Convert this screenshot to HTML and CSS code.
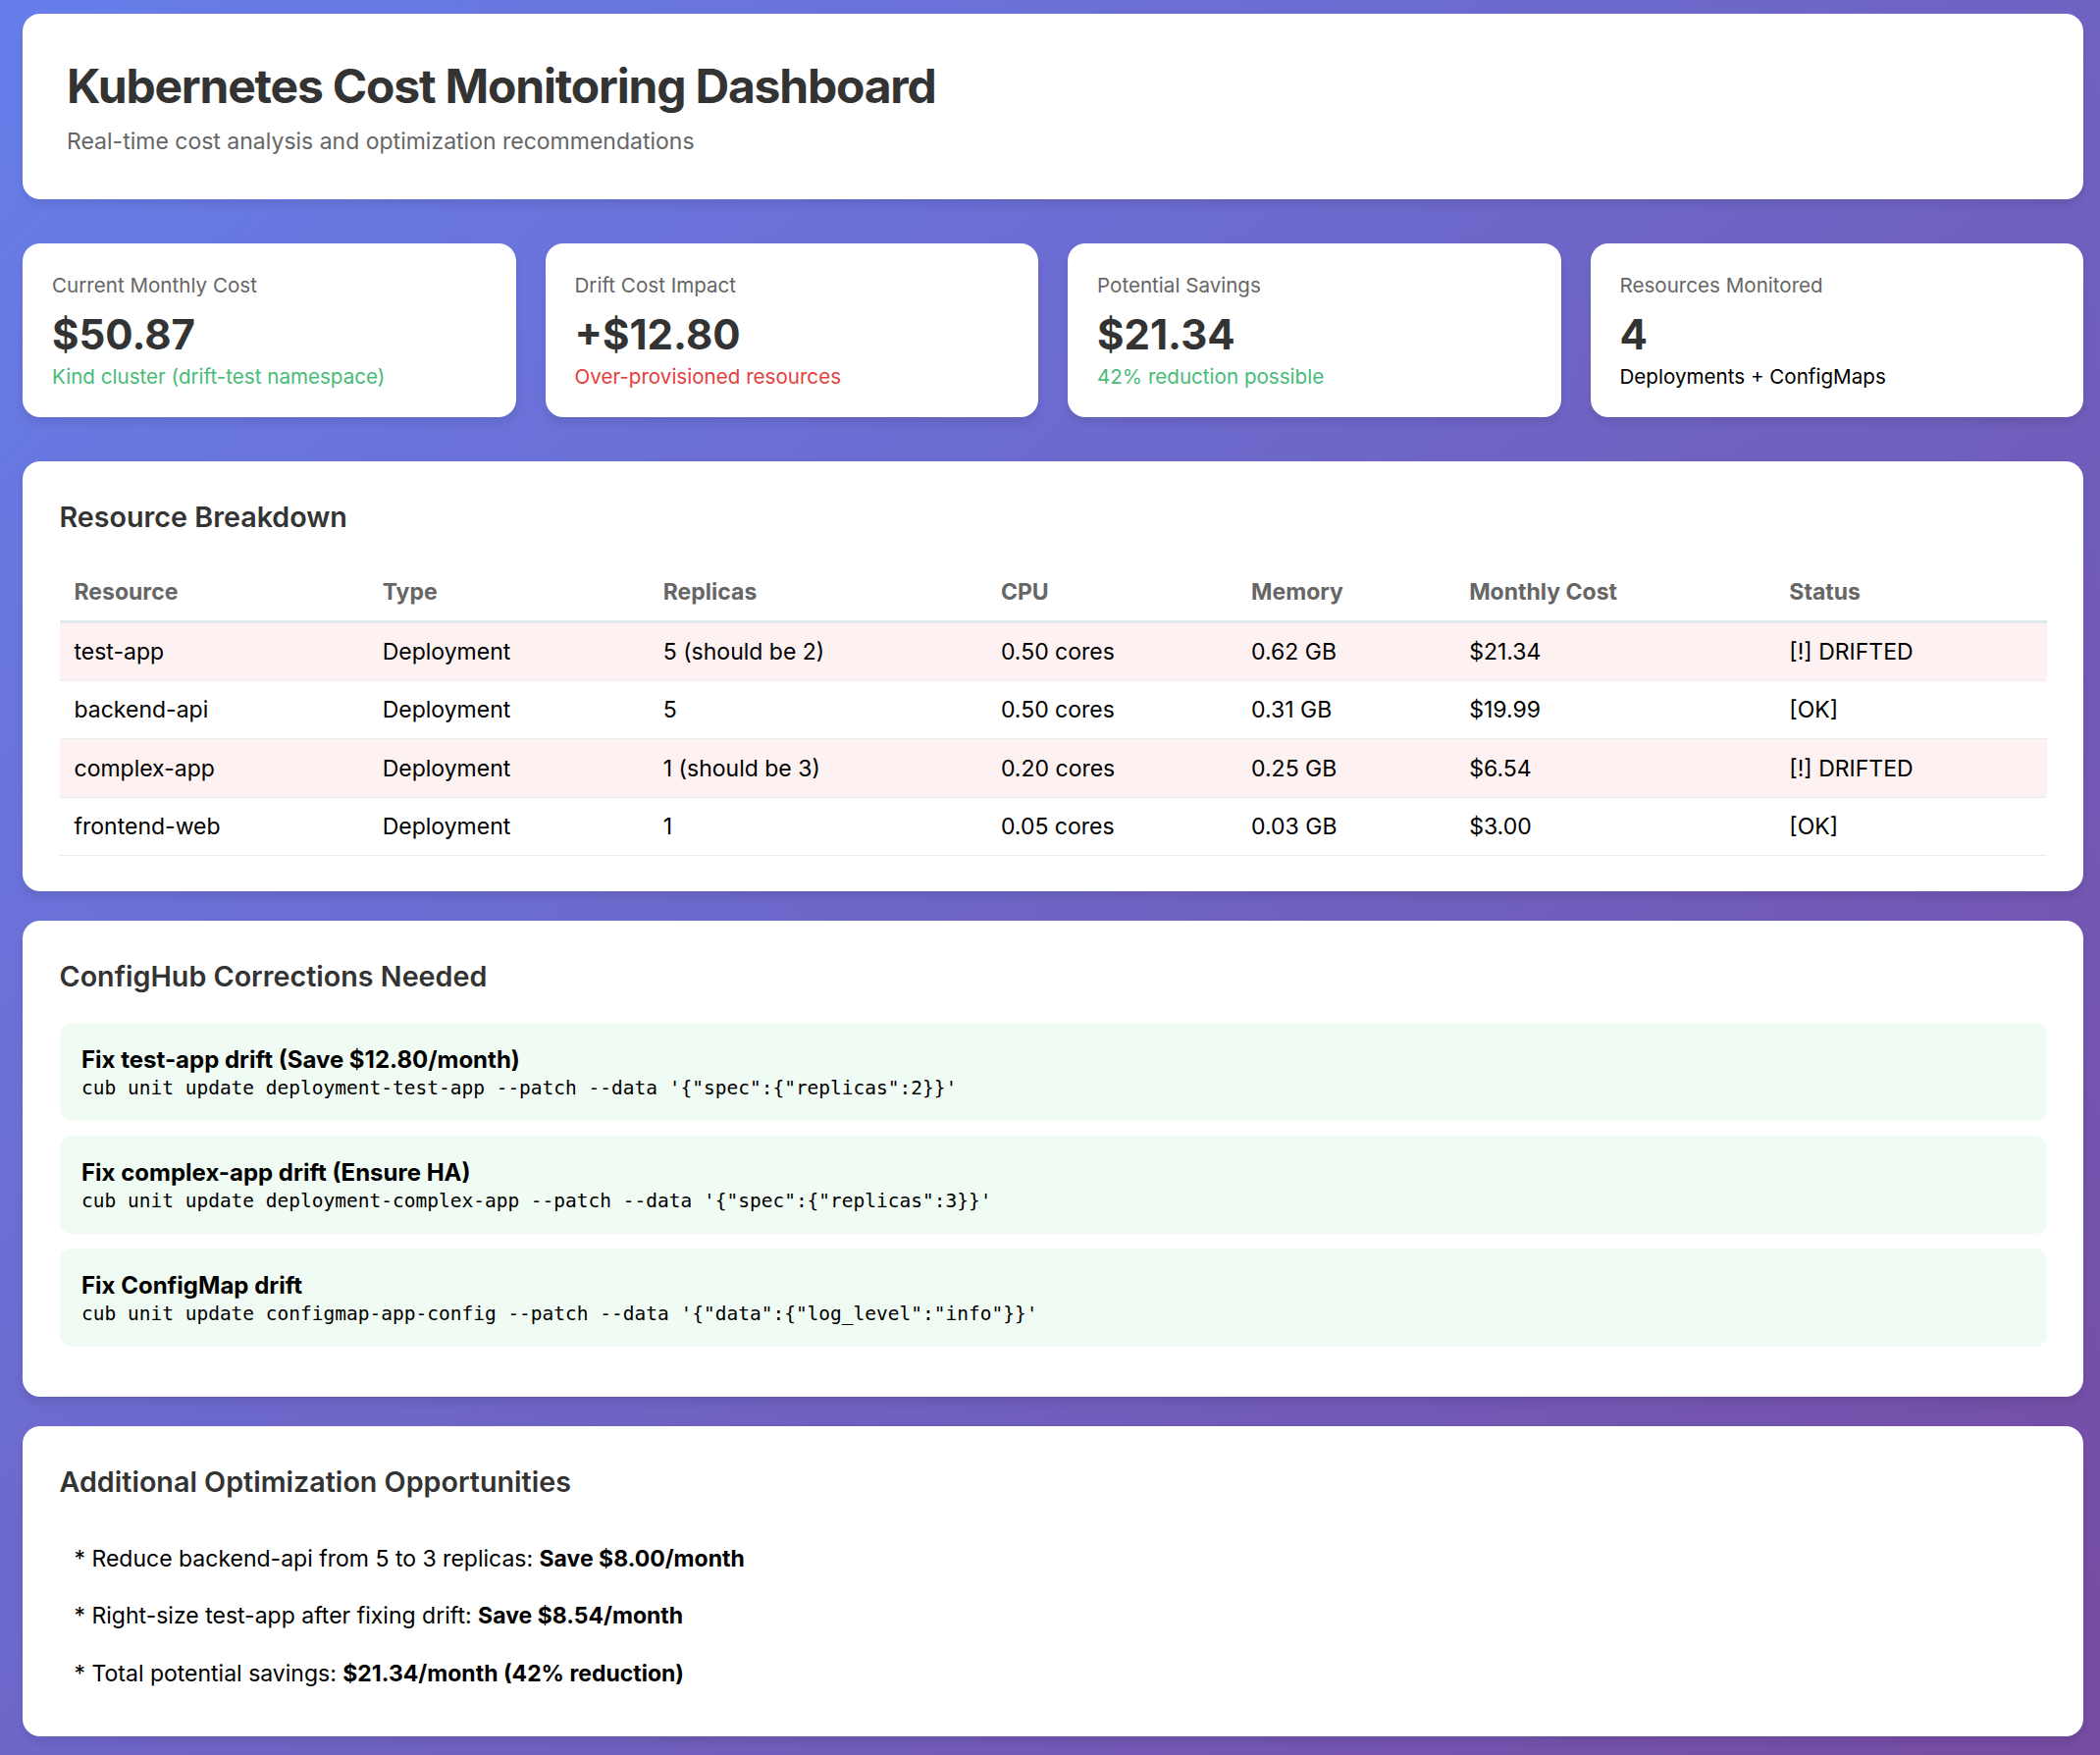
FILE: index.html
```html
<!DOCTYPE html>
<html lang="en">
<head>
<meta charset="utf-8">
<title>Kubernetes Cost Monitoring Dashboard</title>
<link rel="stylesheet" href="styles.css">
</head>
<body>
<div class="page">
  <header class="card header">
    <h1 class="title">Kubernetes Cost Monitoring Dashboard</h1>
    <p class="subtitle">Real-time cost analysis and optimization recommendations</p>
  </header>

  <section class="stats">
    <div class="card stat">
      <div class="stat-label">Current Monthly Cost</div>
      <div class="stat-value">$50.87</div>
      <div class="stat-sub good">Kind cluster (drift-test namespace)</div>
    </div>
    <div class="card stat">
      <div class="stat-label">Drift Cost Impact</div>
      <div class="stat-value">+$12.80</div>
      <div class="stat-sub bad">Over-provisioned resources</div>
    </div>
    <div class="card stat">
      <div class="stat-label">Potential Savings</div>
      <div class="stat-value">$21.34</div>
      <div class="stat-sub good">42% reduction possible</div>
    </div>
    <div class="card stat">
      <div class="stat-label">Resources Monitored</div>
      <div class="stat-value">4</div>
      <div class="stat-sub plain">Deployments + ConfigMaps</div>
    </div>
  </section>

  <section class="card section">
    <h2 class="section-title">Resource Breakdown</h2>
    <table class="resources">
      <thead>
        <tr>
          <th class="c-res">Resource</th>
          <th class="c-type">Type</th>
          <th class="c-rep">Replicas</th>
          <th class="c-cpu">CPU</th>
          <th class="c-mem">Memory</th>
          <th class="c-cost">Monthly Cost</th>
          <th class="c-status">Status</th>
        </tr>
      </thead>
      <tbody>
        <tr class="drifted">
          <td>test-app</td><td>Deployment</td><td>5 (should be 2)</td><td>0.50 cores</td><td>0.62 GB</td><td>$21.34</td><td>[!] DRIFTED</td>
        </tr>
        <tr>
          <td>backend-api</td><td>Deployment</td><td>5</td><td>0.50 cores</td><td>0.31 GB</td><td>$19.99</td><td>[OK]</td>
        </tr>
        <tr class="drifted">
          <td>complex-app</td><td>Deployment</td><td>1 (should be 3)</td><td>0.20 cores</td><td>0.25 GB</td><td>$6.54</td><td>[!] DRIFTED</td>
        </tr>
        <tr>
          <td>frontend-web</td><td>Deployment</td><td>1</td><td>0.05 cores</td><td>0.03 GB</td><td>$3.00</td><td>[OK]</td>
        </tr>
      </tbody>
    </table>
  </section>

  <section class="card section">
    <h2 class="section-title">ConfigHub Corrections Needed</h2>
    <div class="fix">
      <div class="fix-title">Fix test-app drift (Save $12.80/month)</div>
      <code class="fix-cmd">cub unit update deployment-test-app --patch --data '{"spec":{"replicas":2}}'</code>
    </div>
    <div class="fix">
      <div class="fix-title">Fix complex-app drift (Ensure HA)</div>
      <code class="fix-cmd">cub unit update deployment-complex-app --patch --data '{"spec":{"replicas":3}}'</code>
    </div>
    <div class="fix">
      <div class="fix-title">Fix ConfigMap drift</div>
      <code class="fix-cmd">cub unit update configmap-app-config --patch --data '{"data":{"log_level":"info"}}'</code>
    </div>
  </section>

  <section class="card section last">
    <h2 class="section-title">Additional Optimization Opportunities</h2>
    <ul class="opps">
      <li>* Reduce backend-api from 5 to 3 replicas: <strong>Save $8.00/month</strong></li>
      <li>* Right-size test-app after fixing drift: <strong>Save $8.54/month</strong></li>
      <li>* Total potential savings: <strong>$21.34/month (42% reduction)</strong></li>
    </ul>
  </section>
</div>
</body>
</html>
```
FILE: styles.css
```css
* { box-sizing: border-box; }

html, body {
  margin: 0;
  padding: 0;
}

body {
  font-family: Inter, "Noto Sans", "Liberation Sans", sans-serif;
  background: linear-gradient(135deg, #667eea 0%, #764ba2 100%);
  min-height: 1788px;
  color: #000;
}

.page {
  padding: 14px 17px 18px 23px;
}

.card {
  background: #fff;
  border-radius: 18px;
  box-shadow: 0 6px 9px rgba(0, 0, 0, 0.08);
}

.header {
  padding: 45px;
  margin-bottom: 45px;
}

.title {
  margin: 0 0 13px;
  font-size: 48px;
  font-weight: 700;
  letter-spacing: -1.2px;
  color: #333;
  line-height: 1.2;
}

.subtitle {
  margin: 0;
  font-size: 23px;
  color: #666;
}

.stats {
  display: grid;
  grid-template-columns: repeat(4, 1fr);
  gap: 30px;
  margin-bottom: 45px;
}

.stat {
  padding: 30px 30px 29px;
}

.stat-label {
  font-size: 20.6px;
  color: #666;
  margin-bottom: 12px;
}

.stat-value {
  font-size: 42px;
  font-weight: 700;
  color: #333;
  margin-bottom: 5px;
}

.stat-sub {
  font-size: 20.6px;
}

.stat-sub.good { color: #48bb78; }
.stat-sub.bad { color: #e53e3e; }
.stat-sub.plain { color: #000; }

.section {
  padding: 39px 37.5px 36px;
  margin-bottom: 30px;
}

.section.last {
  margin-bottom: 0;
  padding-bottom: 35px;
}

.section-title {
  margin: 0 0 30px;
  font-size: 28.7px;
  font-weight: 600;
  color: #333;
}

.resources {
  width: 100%;
  border-collapse: collapse;
  font-size: 23px;
}

.resources th {
  text-align: left;
  font-weight: 700;
  color: #666;
  padding: 15px;
  border-bottom: 3px solid #e2e8f0;
}

.resources td {
  padding: 15.2px 15px;
  border-bottom: 1.5px solid #e9edf2;
  color: #000;
}

.resources tr.drifted td {
  background: #fdf1f1;
}

.c-res { width: 314px; }
.c-type { width: 286px; }
.c-rep { width: 344px; }
.c-cpu { width: 255px; }
.c-mem { width: 222px; }
.c-cost { width: 326px; }
.c-status { width: 277px; }

.fix {
  background: #f0fbf3;
  border-radius: 12px;
  padding: 22.5px;
  margin-bottom: 15px;
}

.fix-title {
  font-size: 24px;
  font-weight: 700;
  color: #000;
}

.fix-cmd {
  display: block;
  margin-top: 3px;
  font-family: "DejaVu Sans Mono", "Liberation Mono", monospace;
  font-size: 19.5px;
  color: #000;
}

.opps {
  list-style: none;
  margin: 32px 0 0;
  padding: 0;
}

.opps li {
  font-size: 23px;
  padding: 15.1px 15px;
}

.opps strong { font-weight: 700; }
```
